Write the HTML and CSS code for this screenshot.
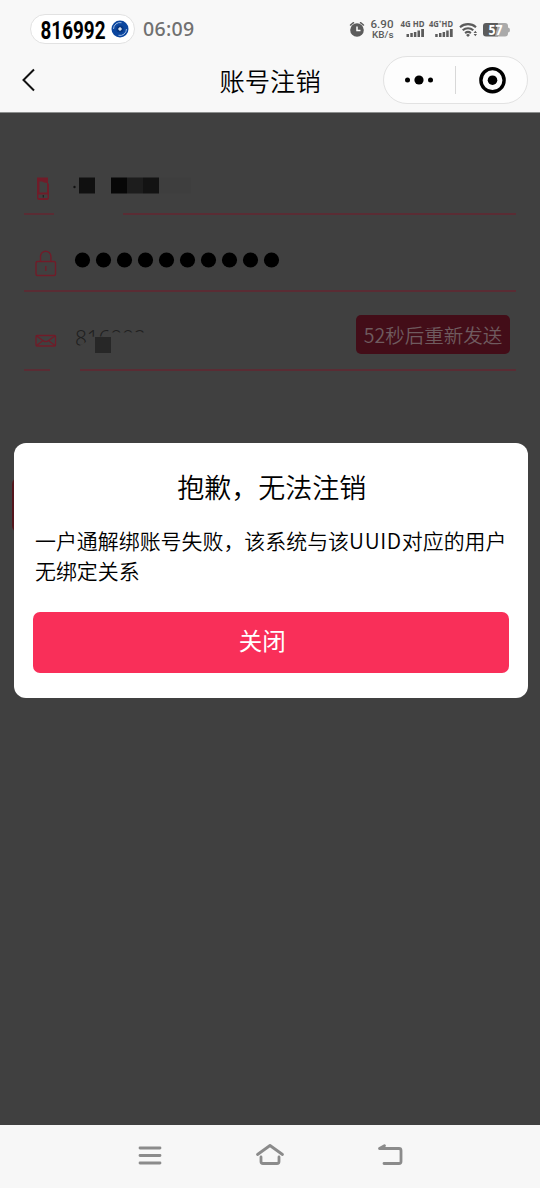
FILE: index.html
```html
<!DOCTYPE html>
<html lang="zh-CN">
<head>
<meta charset="utf-8">
<title>账号注销</title>
<link rel="stylesheet" href="styles.css">
</head>
<body>
<div class="screen">
  <header class="header">
    <div class="status">
      <div class="pill">
        <svg width="104" height="28" viewBox="0 0 104 28">
          <text class="code" x="9.500" y="23.500" textLength="65" lengthAdjust="spacingAndGlyphs">816992</text>
          <circle cx="89" cy="14" r="8.500" fill="#0b469f"/>
          <path d="M82.500 14a6.500 6.500 0 0 1 8-6.300M95.500 14a6.500 6.500 0 0 1-8 6.300" fill="none" stroke="#a9c4e8" stroke-width=".9"/>
          <circle cx="89" cy="14" r="3.600" fill="#063783"/>
          <path d="M89 12.300l.6 1.100 1.100.6-1.100.6-.6 1.100-.6-1.100-1.100-.6 1.100-.6z" fill="#fff" stroke="#fff" stroke-width=".7"/>
        </svg>
      </div>
      <span class="clock">06:09</span>
      <svg class="indicators" width="162" height="24" viewBox="349 18 162 24">
        <g fill="#5c5c5c">
          <circle cx="357" cy="30" r="6.800"/>
          <path d="M350.500 25l3-2.300M363.500 25l-3-2.300" stroke="#5c5c5c" stroke-width="1.500" stroke-linecap="round"/>
          <path d="M357 26.500v4h3.500" fill="none" stroke="#fff" stroke-width="1.500"/>
          <text class="mini" x="370.500" y="28" font-size="10.500" textLength="23" lengthAdjust="spacingAndGlyphs">6.90</text>
          <text class="mini" x="372" y="37.500" font-size="9" textLength="21.500" lengthAdjust="spacingAndGlyphs">KB/s</text>
          <text class="net" x="400.500" y="26.800" textLength="24" lengthAdjust="spacingAndGlyphs">4G HD</text>
          <text class="net" x="429" y="26.800" textLength="24" lengthAdjust="spacingAndGlyphs">4G⁺HD</text>
          <path id="bars" d="M406.500 34h2.500v3h-2.500zM410.300 33h2.500v4h-2.500zM413.900 32h2.500v5h-2.500zM417.500 30.500h2.500v6.500h-2.500zM421.200 29h2.800v8h-2.800z"/>
          <use href="#bars" x="28.700"/>
          <path d="M460 27.200a12 12 0 0 1 16 0M462.700 30.300a8 8 0 0 1 10.600 0M465.100 33.100a4.600 4.600 0 0 1 5.800 0" fill="none" stroke="#5c5c5c" stroke-width="2.100"/>
          <path d="M466 35l2-1.200 2 1.200-2 2zM475.300 30.700l1.700 2.200h-3.400zM475.300 36.200l1.700-2.200h-3.400z"/>
          <path d="M486 23h12v13.500h-12q-3 0-3-3v-7.500q0-3 3-3z"/>
          <path d="M498 23h7q3 0 3 3v1.500q2 0 2 2.500t-2 2.500v1q0 3-3 3h-10z" fill="#aaa"/>
        </g>
        <text class="battery" x="488.500" y="34.800" textLength="14" lengthAdjust="spacingAndGlyphs">57</text>
      </svg>
    </div>
    <div class="navbar">
      <svg class="back" width="20" height="28" viewBox="0 0 20 28"><path d="M14 4.500L3.500 15 14 25.500" fill="none" stroke="#111" stroke-width="2"/></svg>
      <h1 class="title">账号注销</h1>
      <div class="capsule">
        <svg class="more" width="71" height="46" viewBox="0 0 71 46"><circle cx="23.500" cy="23" r="2.500"/><circle cx="35" cy="23" r="4.600"/><circle cx="46.500" cy="23" r="2.500"/></svg>
        <svg class="target" width="72" height="46" viewBox="0 0 72 46"><circle cx="37.500" cy="23.200" r="11.600" fill="none" stroke="#000" stroke-width="3.400"/><circle cx="37.500" cy="23.200" r="4.800"/></svg>
      </div>
    </div>
  </header>

  <main class="page">
    <div class="field field-phone">
      <svg class="row-art" width="180" height="34" viewBox="24 168.500 180 34">
        <path d="M37 177h11v6h1v14.500q0 2-2 2h-8q-2 0-2-2zM39.500 181v11h7.500v-9.500l-3-.5-2-1zM38.500 194v3.500h9v-3.500z" fill="#701c29" fill-rule="evenodd"/>
        <path d="M43.300 194.500v2.500" stroke="#222" stroke-width="1.200"/>
        <circle cx="74.500" cy="186.500" r="1.200" fill="#111"/>
        <path d="M79 177h16v16h-16z" fill="#101010"/>
        <path d="M111 177h16v16h-16z" fill="#070707"/>
        <path d="M127 177h16v16h-16z" fill="#1d1d1d"/>
        <path d="M143 177h16v16h-16z" fill="#131313"/>
        <path d="M159 177h32v16h-32z" fill="#3e3e3e"/>
      </svg>
      <div class="rule"><i class="rule-a"></i><i class="rule-b"></i></div>
    </div>
    <div class="field field-password">
      <svg class="row-art" width="270" height="30" viewBox="24 248 270 30">
        <g fill="none" stroke="#701c29" stroke-width="1.400">
          <rect x="36" y="261.500" width="19.500" height="14" rx="1.500"/>
          <path d="M40.500 261.500v-5a5.200 5.200 0 0 1 10.400 0v5M45.800 266v5"/>
        </g>
        <g fill="#000">
          <circle cx="82.500" cy="260" r="7.600"/><circle cx="103.500" cy="260" r="7.600"/><circle cx="124.500" cy="260" r="7.600"/><circle cx="145.500" cy="260" r="7.600"/><circle cx="166.500" cy="260" r="7.600"/><circle cx="187.500" cy="260" r="7.600"/><circle cx="208.500" cy="260" r="7.600"/><circle cx="229.500" cy="260" r="7.600"/><circle cx="250.500" cy="260" r="7.600"/><circle cx="271.500" cy="260" r="7.600"/>
        </g>
      </svg>
      <div class="rule"><i class="rule-b"></i></div>
    </div>
    <div class="field field-code">
      <div class="code-row">
        <svg class="row-art" width="140" height="34" viewBox="24 324 140 34">
          <defs><clipPath id="wipe"><path d="M70 326h80v6.500H105l-2 4h-8l-8 1v4l-7 4H70z"/></clipPath></defs>
          <g fill="none" stroke="#701c29" stroke-width="1.300">
            <rect x="36" y="335.500" width="19.500" height="10.500" rx="1"/>
            <path d="M36.500 336l8 5.500h2.500l8-5.500M36.500 345.500l6-4.500M55 345.500l-6-4.500"/>
          </g>
          <text class="sms" x="75" y="346" textLength="71" clip-path="url(#wipe)">816992</text>
          <path d="M95 337h16v16H95z" fill="#272727"/>
        </svg>
        <button class="resend">52秒后重新发送</button>
      </div>
      <div class="rule"><i class="rule-c"></i><i class="rule-b"></i></div>
    </div>
    <div class="submit"></div>

    <section class="dialog">
      <h2 class="dialog-title">抱歉，无法注销</h2>
      <p class="dialog-text">一户通解绑账号失败，该系统与该<span class="latin">UUID</span>对应的用户<br>无绑定关系</p>
      <button class="close">关闭</button>
    </section>
  </main>

  <nav class="system-nav">
    <svg width="30" height="30" viewBox="0 0 30 30"><path d="M5 7h20M5 14.500h20M5 22h20"/></svg>
    <svg width="30" height="30" viewBox="0 0 30 30"><path d="M2.500 13.500L15 4.500l12.500 9M6 16v4.500q0 2 2 2h14q2 0 2-2V16"/></svg>
    <svg width="30" height="30" viewBox="0 0 30 30"><path d="M9.500 4.700L4.500 7.500H24q2 0 2 2v11q0 2-2 2H9"/></svg>
  </nav>
</div>
</body>
</html>
```
FILE: styles.css
```css
* { box-sizing: border-box; }
body { margin: 0; font-family: "Noto Sans CJK SC", sans-serif; color: #000; }
svg { display: block; flex: none; }
button { border: 0; padding: 0; font-family: inherit; }
.screen { width: 540px; height: 1188px; display: flex; flex-direction: column; background: #404040; overflow: hidden; }
.header { height: 113px; background: #f8f8f8; border-bottom: 1px solid #8d8f8e; flex: none; }
.status { height: 56px; display: flex; align-items: flex-start; padding: 14px 0 0 30px; }
.pill { width: 105px; height: 30px; border: 1px solid #e2e2e2; border-radius: 15px; background: #fff; }
.pill svg { overflow: visible; }
.code { font: 700 26.500px "Roboto", sans-serif; }
.clock { margin: 2px 0 0 8px; width: 54px; font: 500 19.500px/26px "Noto Sans", sans-serif; letter-spacing: .3px; color: #707070; }
.indicators { margin: 4px 0 0 152px; }
.mini { font-family: "Roboto", sans-serif; font-weight: 500; }
.net { font: 700 8.500px "Noto Sans", sans-serif; }
.battery { font: 700 14px "Noto Sans", sans-serif; fill: #fff; }
.navbar { height: 48px; display: flex; align-items: center; padding: 0 12px 0 20px; }
.back { margin-top: -2px; }
.title { margin: 0 0 0 179.500px; width: 163.500px; font-size: 25.300px; line-height: 40px; font-weight: 350; white-space: nowrap; }
.capsule { width: 145px; height: 48px; display: flex; border: 1px solid #e2e2e2; border-radius: 24px; background: #fdfdfd; }
.target { background: linear-gradient(#d8d8d8, #d8d8d8) 0 50% / 1px 28px no-repeat; }
.page { flex: 1; position: relative; }
.field { margin: 0 24px; display: flex; flex-direction: column; justify-content: space-between; }
.field-phone { height: 101.500px; padding-top: 55.500px; }
.field-password { height: 77px; padding-top: 33.500px; }
.field-code { height: 79px; padding-top: 23.500px; }
.rule { display: flex; height: 1.500px; justify-content: space-between; }
.rule i { height: 1.500px; background: #5a2c34; }
.rule-a { width: 30px; margin-right: 69px; }
.rule-b { flex: 1; }
.rule-c { width: 26px; margin-right: 30px; }
.code-row { display: flex; justify-content: space-between; padding-right: 6px; }
.code-row .row-art { margin-top: 9px; }
.sms { font: 300 21px "Noto Sans", sans-serif; fill: #202020; }
.resend { width: 154px; height: 39px; border-radius: 5px; background: #430d18; color: #6f5b5f; font-size: 19.500px; line-height: 36px; font-weight: 350; white-space: nowrap; }
.submit { margin: 107px 12px 0; height: 54px; border-radius: 6px; background: #54151c; }
.dialog { position: absolute; left: 13.500px; top: 329.500px; width: 514.500px; height: 255px; padding: 24.500px 19.500px 0; border-radius: 12px; background: #fff; }
.dialog-title { margin: 0; padding-left: 2px; text-align: center; font-size: 27px; line-height: 40px; font-weight: 350; }
.dialog-text { margin: 17.500px 0 0 2px; font-size: 20.950px; line-height: 30px; font-weight: 350; white-space: nowrap; }
.latin { letter-spacing: .6px; }
.close { display: block; width: 475.500px; height: 61.500px; margin-top: 27px; padding: 0 17px 5px 0; border-radius: 7px; background: #f92f59; color: #fff; font-size: 23.500px; line-height: 52px; }
.system-nav { height: 63px; flex: none; background: #f7f7f7; display: flex; justify-content: center; gap: 90px; padding-top: 16px; }
.system-nav svg { fill: none; stroke: #8b8b8b; stroke-width: 2.800; stroke-linecap: round; stroke-linejoin: round; }
```
